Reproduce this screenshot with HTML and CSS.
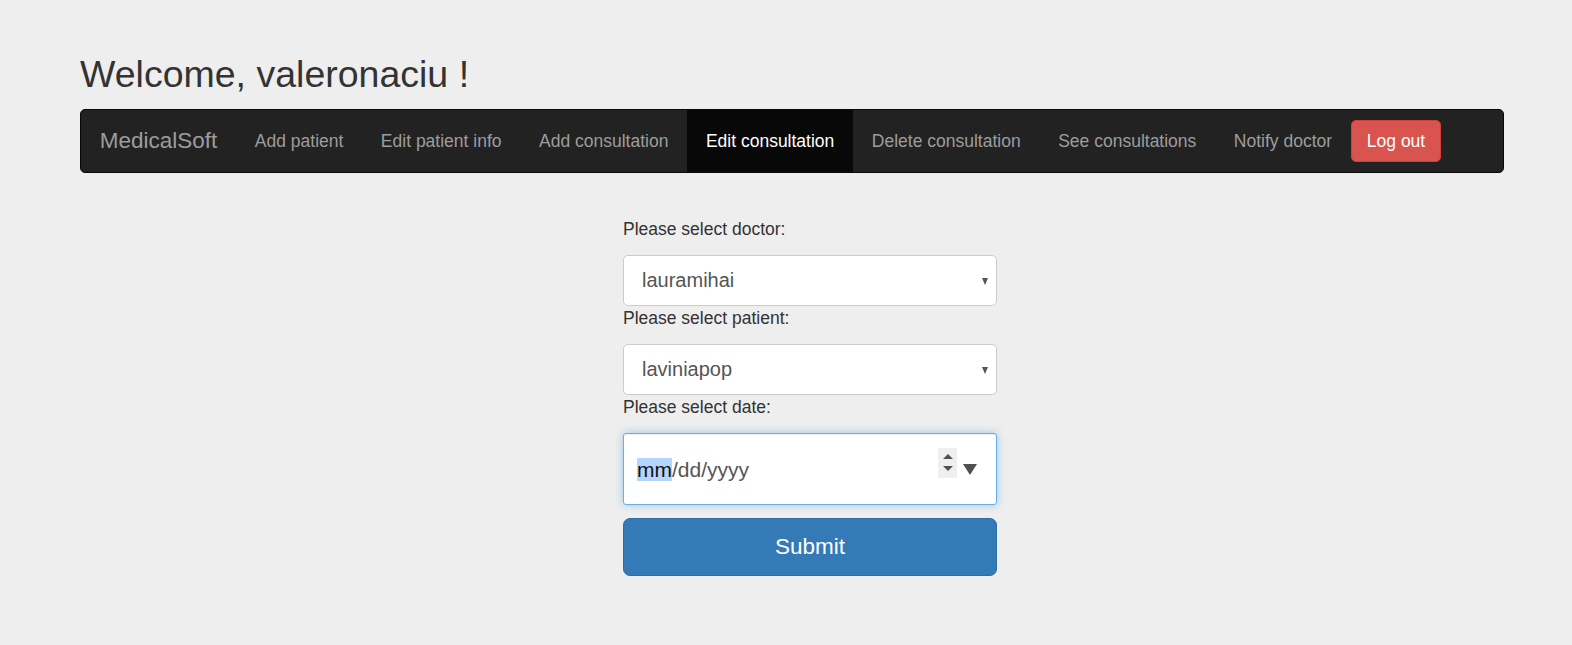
FILE: index.html
```html
<!DOCTYPE html>
<html lang="en">
<head>
<meta charset="utf-8">
<title>MedicalSoft - Edit consultation</title>
<link rel="stylesheet" href="styles.css">
</head>
<body>
<div class="page">
  <h2 class="welcome">Welcome, valeronaciu !</h2>
  <nav class="navbar">
    <span class="brand">MedicalSoft</span>
    <a class="nav-link">Add patient</a>
    <a class="nav-link">Edit patient info</a>
    <a class="nav-link">Add consultation</a>
    <a class="nav-link active">Edit consultation</a>
    <a class="nav-link">Delete consultation</a>
    <a class="nav-link">See consultations</a>
    <a class="nav-link">Notify doctor</a>
    <button class="btn-logout">Log out</button>
  </nav>
  <form class="form">
    <label class="label">Please select doctor:</label>
    <div class="select">
      <span class="select-value">lauramihai</span>
      <span class="select-caret"></span>
    </div>
    <label class="label">Please select patient:</label>
    <div class="select">
      <span class="select-value">laviniapop</span>
      <span class="select-caret"></span>
    </div>
    <label class="label">Please select date:</label>
    <div class="date">
      <span class="date-text"><span class="date-sel">mm</span>/dd/yyyy</span>
      <span class="spin">
        <span class="spin-up"></span>
        <span class="spin-down"></span>
      </span>
      <span class="date-drop"></span>
    </div>
    <button type="button" class="btn-submit">Submit</button>
  </form>
</div>
</body>
</html>
```
FILE: styles.css
```css
html, body {
  margin: 0;
  padding: 0;
  background: #eeeeee;
}
body {
  font-family: "Liberation Sans", Arial, sans-serif;
  color: #333333;
  font-size: 17.5px;
}
.page {
  margin-left: 80px;
  width: 1424px;
  padding-top: 54px;
}
.welcome {
  margin: 0 0 14px 0;
  font-size: 37.5px;
  font-weight: 500;
  line-height: 41px;
  color: #333333;
}
.navbar {
  box-sizing: border-box;
  height: 64px;
  display: flex;
  align-items: stretch;
  background: #222222;
  border: 1px solid #080808;
  border-radius: 5px;
}
.brand {
  padding: 0 18.75px;
  line-height: 62px;
  font-size: 22.5px;
  color: #9d9d9d;
}
.nav-link {
  padding: 0 18.75px;
  line-height: 62px;
  font-size: 17.5px;
  color: #9d9d9d;
  cursor: pointer;
}
.nav-link.active {
  background: #080808;
  color: #ffffff;
}
.btn-logout {
  align-self: center;
  margin-left: 0;
  box-sizing: border-box;
  height: 42px;
  padding: 0 15px;
  font-family: "Liberation Sans", Arial, sans-serif;
  font-size: 17.5px;
  line-height: 40px;
  color: #ffffff;
  background: #d9534f;
  border: 1px solid #d43f3a;
  border-radius: 5px;
}
.form {
  margin: 44px 0 0 543px;
  width: 374px;
  display: flex;
  flex-direction: column;
}
.label {
  display: block;
  font-size: 17.5px;
  line-height: 25px;
  margin-bottom: 13px;
  color: #333333;
}
.select {
  box-sizing: border-box;
  height: 51px;
  display: flex;
  align-items: center;
  padding: 0 8px 0 18px;
  background: #ffffff;
  border: 1px solid #cccccc;
  border-radius: 5px;
}
.select-value {
  flex: 1;
  font-size: 20px;
  color: #555555;
}
.select-caret {
  width: 0;
  height: 0;
  border-left: 3.5px solid transparent;
  border-right: 3.5px solid transparent;
  border-top: 7px solid #555555;
  margin-top: 2px;
}
.date {
  box-sizing: border-box;
  height: 72px;
  display: flex;
  align-items: center;
  padding: 0 19px 0 13px;
  margin-bottom: 13px;
  background: #ffffff;
  border: 1px solid #66afe9;
  border-radius: 3px;
  box-shadow: inset 0 1px 1px rgba(0,0,0,.075), 0 0 8px rgba(102,175,233,.6);
}
.date-text {
  flex: 1;
  font-size: 21px;
  line-height: 25px;
  color: #555555;
}
.date-sel {
  background: #b4d5fe;
  color: #111111;
}
.spin {
  width: 19px;
  height: 30px;
  background: #efefef;
  display: flex;
  flex-direction: column;
  align-items: center;
  justify-content: center;
  gap: 7px;
  margin-right: 6px;
  margin-bottom: 13px;
}
.spin-up {
  width: 0;
  height: 0;
  border-left: 5px solid transparent;
  border-right: 5px solid transparent;
  border-bottom: 5px solid #505050;
}
.spin-down {
  width: 0;
  height: 0;
  border-left: 5px solid transparent;
  border-right: 5px solid transparent;
  border-top: 5px solid #505050;
}
.date-drop {
  width: 0;
  height: 0;
  border-left: 7px solid transparent;
  border-right: 7px solid transparent;
  border-top: 11px solid #505050;
  margin-top: 1px;
}
.btn-submit {
  box-sizing: border-box;
  height: 58px;
  width: 100%;
  font-family: "Liberation Sans", Arial, sans-serif;
  font-size: 22.5px;
  color: #ffffff;
  background: #337ab7;
  border: 1px solid #2e6da4;
  border-radius: 7px;
}
```
